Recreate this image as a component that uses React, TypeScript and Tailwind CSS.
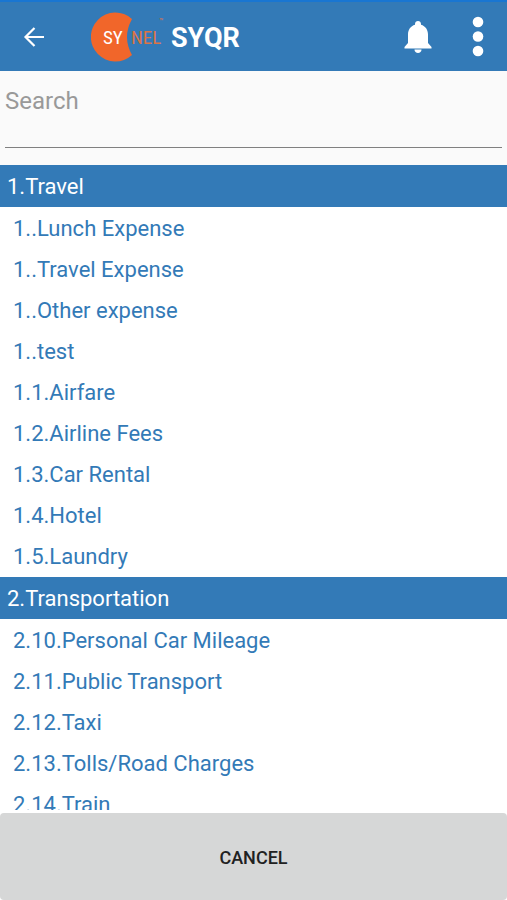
import { useState } from 'react';

type Section = { title: string; items: string[] };

const SECTIONS: Section[] = [
  {
    title: '1.Travel',
    items: [
      '1..Lunch Expense',
      '1..Travel Expense',
      '1..Other expense',
      '1..test',
      '1.1.Airfare',
      '1.2.Airline Fees',
      '1.3.Car Rental',
      '1.4.Hotel',
      '1.5.Laundry',
    ],
  },
  {
    title: '2.Transportation',
    items: [
      '2.10.Personal Car Mileage',
      '2.11.Public Transport',
      '2.12.Taxi',
      '2.13.Tolls/Road Charges',
      '2.14.Train',
    ],
  },
];

function SynelLogo() {
  return (
    <svg width="76" height="50" viewBox="0 0 76 50" role="img" aria-label="Synel" className="shrink-0">
      <path d="M41 7A24.500 24.500 0 1 0 41 43Q31 25 41 7Z" fill="#f1662a" />
      <g fontSize="19" className="font-['Liberation_Sans_Narrow','Roboto_Condensed','Liberation_Sans',sans-serif]">
        <text x="12" y="32" fill="#fff">SY</text>
        <text x="40" y="32" fill="#dc7446">NEL</text>
        <text x="68" y="12" fontSize="8" fill="#dc7446">™</text>
      </g>
    </svg>
  );
}

function Header() {
  return (
    <header className="flex h-[71px] shrink-0 items-center border-t-2 border-[#1976d2] bg-[#337ab7] pl-5 pr-[15px] text-white">
      <button aria-label="Back" className="flex size-7 items-center justify-center">
        <svg width="22" height="20" viewBox="0 0 22 20" fill="none" stroke="currentColor" strokeWidth="2.200">
          <path d="M11.500 1 2.500 10l9 9M2.500 10H21" />
        </svg>
      </button>
      <div className="ml-[43px] flex items-center gap-1">
        <SynelLogo />
        <h1 className="pt-0.5 text-[27px] font-bold leading-8">SYQR</h1>
      </div>
      <button aria-label="Notifications" className="ml-auto">
        <svg width="28" height="34" viewBox="0 0 28 34" fill="currentColor">
          <path d="M14 1c-1.700 0-3 1.200-3 2.900v.8C6.500 6 4 9.800 4 14.500V23l-3.500 4v1.500h27V27L24 23v-8.500C24 9.800 21.500 6 17 4.700v-.8C17 2.200 15.700 1 14 1Z" />
          <path d="M10.500 29.500h7c0 2-1.500 3.500-3.500 3.500S10.500 31.500 10.500 29.500Z" />
        </svg>
      </button>
      <button aria-label="More options" className="ml-8">
        <svg width="28" height="42" viewBox="0 0 28 42" fill="currentColor">
          <circle cx="14" cy="6" r="5.300" />
          <circle cx="14" cy="20.500" r="5.300" />
          <circle cx="14" cy="35" r="5.300" />
        </svg>
      </button>
    </header>
  );
}

export default function App() {
  const [query, setQuery] = useState('');

  const matches = (item: string) => item.toLowerCase().includes(query.toLowerCase());

  return (
    <div className="flex h-screen flex-col bg-white font-[Roboto,sans-serif]">
      <Header />

      {/* Search */}
      <div className="shrink-0 bg-[#fafafa] px-[5px] pb-[17px]">
        <input
          type="text"
          aria-label="Search"
          placeholder="Search"
          value={query}
          onChange={(e) => setQuery(e.target.value)}
          className="block h-[77px] w-full border-b border-[#808080] pb-4 text-2xl text-[#333] outline-none placeholder:text-[#999]"
        />
      </div>

      {/* Expense types */}
      <main className="min-h-0 flex-1 overflow-y-auto text-[22px] [scrollbar-width:none]">
        {SECTIONS.map((section) => (
          <section key={section.title}>
            <h2 className="bg-[#337ab7] px-[7px] pt-0.5 leading-10 text-white">{section.title}</h2>
            <ul className="pt-px">
              {section.items.filter(matches).map((item) => (
                <li key={item}>
                  <button className="block w-full px-[13px] text-left leading-[41px] text-[#337ab7]">{item}</button>
                </li>
              ))}
            </ul>
          </section>
        ))}
      </main>

      <button className="mt-[3px] h-[87px] shrink-0 rounded-sm bg-[#d6d7d7] pt-0.5 text-lg font-medium text-[#212121]">
        CANCEL
      </button>
    </div>
  );
}
